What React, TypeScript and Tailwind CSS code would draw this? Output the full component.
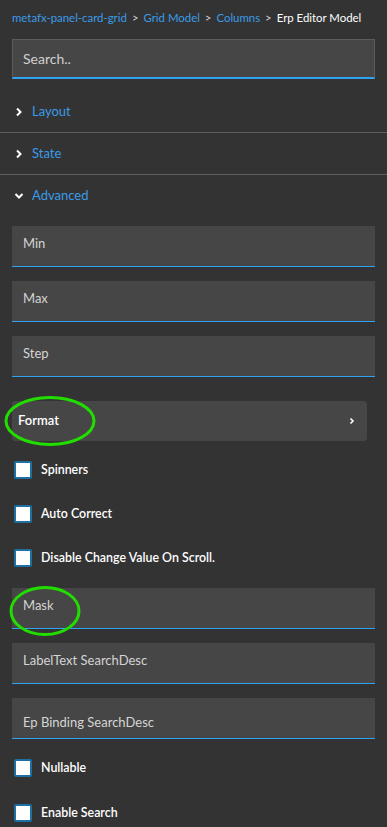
import React from "react";

const Chevron = ({ dir }: { dir: "right" | "down" }) => (
  <svg width="10" height="10" viewBox="0 0 10 10" className="shrink-0">
    {dir === "right" ? (
      <path d="M3 1.5 L6.5 5 L3 8.5" fill="none" stroke="#ffffff" strokeWidth="2" />
    ) : (
      <path d="M1.5 3 L5 6.5 L8.5 3" fill="none" stroke="#ffffff" strokeWidth="2" />
    )}
  </svg>
);

const Field = ({ label, className = "", textClass = "pt-[9px]" }: { label: string; className?: string; textClass?: string }) => (
  <div className={`mx-[12px] h-[41px] bg-[#464646] border-b border-[#2ea3f2] ${className}`}>
    <div className={`px-[11px] text-[13px] leading-[16px] text-[#d4d4d4] ${textClass}`}>{label}</div>
  </div>
);

const Check = ({ label, className = "" }: { label: string; className?: string }) => (
  <div className={`flex items-center ml-[14px] h-[18px] ${className}`}>
    <div className="w-[18px] h-[18px] bg-white border-2 border-[#1e6fa3] rounded-[2px]" />
    <span className="ml-[9px] text-[12.4px] text-white font-semibold">{label}</span>
  </div>
);

const Section = ({ label, open, border = true }: { label: string; open?: boolean; border?: boolean }) => (
  <div className={`h-[42px] flex items-center pl-[14px] ${border ? "border-b border-[#5f5f5f]" : ""}`}>
    <Chevron dir={open ? "down" : "right"} />
    <span className="ml-[8px] text-[13px] text-[#3a9ce8]">{label}</span>
  </div>
);

export default function App() {
  return (
    <div
      className="w-[387px] h-[827px] bg-[#333333] overflow-hidden"
      style={{ fontFamily: "Lato, 'Noto Sans', sans-serif" }}
    >
      <div className="flex items-center h-[35px] pl-[12px] text-[11.4px] pt-[1px] whitespace-nowrap">
        <span className="text-[#3a9ce8]">metafx-panel-card-grid</span>
        <span className="text-[#cfcfcf] mx-[5px]">&gt;</span>
        <span className="text-[#3a9ce8]">Grid Model</span>
        <span className="text-[#cfcfcf] mx-[5px]">&gt;</span>
        <span className="text-[#3a9ce8]">Columns</span>
        <span className="text-[#cfcfcf] mx-[5px]">&gt;</span>
        <span className="text-white">Erp Editor Model</span>
      </div>
      <div className="mx-[12px] mt-[4px] h-[40px] bg-[#464646] border border-[#5c5c5c] border-b-2 border-b-[#2ea3f2] flex items-center px-[10px]">
        <span className="text-[14px] text-[#d0d0d0]">Search..</span>
      </div>
      <div className="mt-[12px]">
        <Section label="Layout" />
        <Section label="State" />
        <Section label="Advanced" open border={false} />
      </div>
      <Field label="Min" className="mt-[9px]" />
      <Field label="Max" className="mt-[14px]" />
      <Field label="Step" className="mt-[14px]" />
      <div className="relative mt-[24px] ml-[12px] w-[355px] h-[40px] bg-[#464646] rounded-[3px] flex items-center justify-between px-[6px]">
        <span className="text-[13px] text-white font-semibold">Format</span>
        <svg width="8" height="8" viewBox="0 0 8 8" className="mr-[5px]">
          <path d="M2.5 1.5 L5 4 L2.5 6.5" fill="none" stroke="#ffffff" strokeWidth="1.6" />
        </svg>
        <svg className="absolute left-[-8px] top-[-6px]" width="92" height="52" viewBox="0 0 92 52">
          <ellipse cx="46" cy="26" rx="44" ry="23.5" fill="none" stroke="#22dd00" strokeWidth="3" />
        </svg>
      </div>
      <Check label="Spinners" className="mt-[20px]" />
      <Check label="Auto Correct" className="mt-[26px]" />
      <Check label="Disable Change Value On Scroll." className="mt-[26px]" />
      <div className="relative">
        <Field label="Mask" className="mt-[21px]" />
        <svg className="absolute left-[9px] top-[-3px]" width="72" height="52" viewBox="0 0 72 52">
          <ellipse cx="36" cy="26" rx="34" ry="23.5" fill="none" stroke="#22dd00" strokeWidth="3" />
        </svg>
      </div>
      <Field label="LabelText SearchDesc" className="mt-[14px]" />
      <Field label="Ep Binding SearchDesc" className="mt-[14px]" textClass="pt-[16px]" />
      <Check label="Nullable" className="mt-[20px]" />
      <Check label="Enable Search" className="mt-[27px]" />
    </div>
  );
}
